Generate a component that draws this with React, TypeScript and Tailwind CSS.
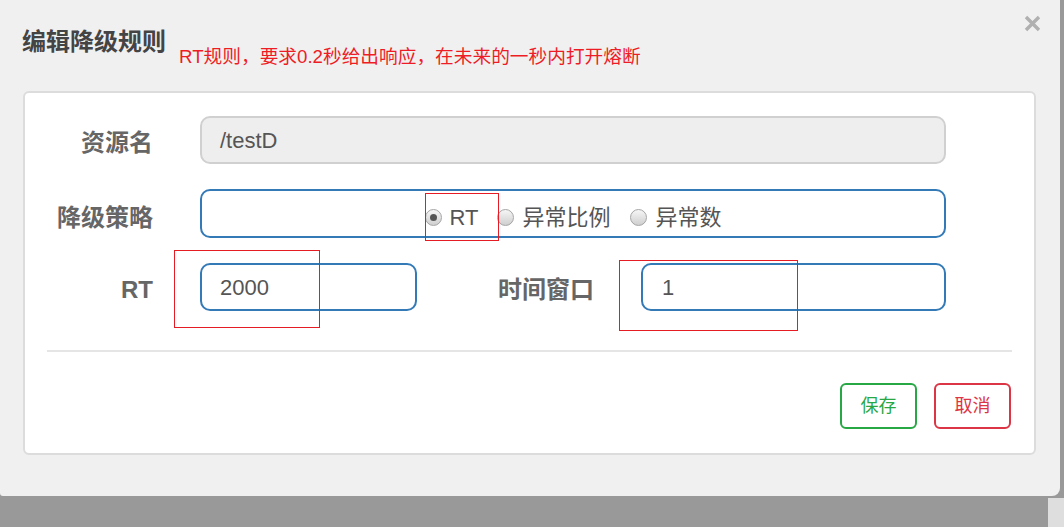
import React from "react";

const font = "font-['Liberation_Sans','Noto_Sans_CJK_SC',sans-serif]";

function Radio({ checked, label }: { checked?: boolean; label: string }) {
  return (
    <label className="flex items-center">
      <span className="flex h-[17px] w-[17px] shrink-0 items-center justify-center rounded-full border border-[#a5a5a5] bg-gradient-to-b from-[#f6f6f6] to-[#cfcfcf]">
        {checked && <span className="h-[7px] w-[7px] rounded-full bg-[#555]" />}
      </span>
      <span className="ml-[8px] text-[22px] leading-none text-[#555]">{label}</span>
    </label>
  );
}

export default function App() {
  return (
    <div className={`relative h-[527px] w-full overflow-hidden bg-[#999] ${font}`}>
      <div className="relative h-[496px] w-[1060px] rounded-br-[8px] rounded-bl-[3px] bg-[#f0f0f0]">
        {/* header */}
        <div className="flex h-[91px] items-start pl-[22px] pt-[28px]">
          <h4 className="text-[24px] font-bold leading-[28px] text-[#444]">编辑降级规则</h4>
          <span className="ml-[13px] mt-[18px] text-[18.7px] leading-[22px] text-[#ee1c25]">
            RT规则，要求0.2秒给出响应，在未来的一秒内打开熔断
          </span>
        </div>
        <button className="absolute left-[1024px] top-[15px] h-[17px] w-[17px]">
          <svg viewBox="0 0 17 17" className="h-[17px] w-[17px]">
            <path d="M2 2 L15 15 M15 2 L2 15" stroke="#b0b0b0" strokeWidth="3.4" />
          </svg>
        </button>

        {/* card */}
        <div className="ml-[23px] h-[364px] w-[1013px] rounded-[6px] border-2 border-[#dcdcdc] bg-white">
          <div className="pt-[23px]">
            <div className="flex items-center">
              <div className="w-[128px] pt-[6px] text-right text-[24px] font-bold text-[#666]">资源名</div>
              <div className="ml-[47px] flex h-[48px] w-[746px] items-center rounded-[10px] border-2 border-[#d0d0d0] bg-[#eee] px-[18px] text-[22px] text-[#555]">
                /testD
              </div>
            </div>

            <div className="mt-[25px] flex items-center">
              <div className="w-[128px] pt-[8px] text-right text-[24px] font-bold text-[#666]">降级策略</div>
              <div className="ml-[47px] flex h-[49px] w-[746px] items-center justify-center rounded-[10px] border-2 border-[#337ab7] pt-[8px]">
                <Radio checked label="RT" />
                <span className="w-[19px]" />
                <Radio label="异常比例" />
                <span className="w-[20px]" />
                <Radio label="异常数" />
              </div>
            </div>

            <div className="mt-[25px] flex items-center">
              <div className="w-[128px] pt-[6px] text-right text-[24px] font-bold text-[#666]">RT</div>
              <div className="ml-[47px] flex h-[48px] w-[217px] items-center rounded-[10px] border-2 border-[#337ab7] px-[18px] text-[22px] text-[#555]">
                2000
              </div>
              <div className="w-[177px] pt-[6px] text-right text-[24px] font-bold text-[#666]">时间窗口</div>
              <div className="ml-[47px] flex h-[48px] w-[305px] items-center rounded-[10px] border-2 border-[#337ab7] px-[19px] text-[22px] text-[#555]">
                1
              </div>
            </div>
          </div>

          <div className="mx-[22px] mt-[39px] h-[2px] bg-[#e5e5e5]" />

          <div className="mr-[23px] mt-[31px] flex justify-end gap-[17px]">
            <button className="h-[46px] w-[77px] rounded-[6px] border-2 border-[#28a745] text-[18px] text-[#28a745]">
              保存
            </button>
            <button className="h-[46px] w-[77px] rounded-[6px] border-2 border-[#dc3545] text-[18px] text-[#dc3545]">
              取消
            </button>
          </div>
        </div>

        {/* annotation boxes */}
        <div className="absolute left-[425px] top-[193px] h-[48px] w-[74px] border border-[#e51c23]" />
        <div className="absolute left-[174px] top-[250px] h-[78px] w-[146px] border border-[#e51c23]" />
        <div className="absolute left-[619px] top-[260px] h-[71px] w-[179px] border border-[#e51c23]" />
      </div>
      <div className="flex justify-end">
        <div className="mt-[2px] h-[29px] w-[16px] bg-[#dedede]" />
      </div>
    </div>
  );
}
